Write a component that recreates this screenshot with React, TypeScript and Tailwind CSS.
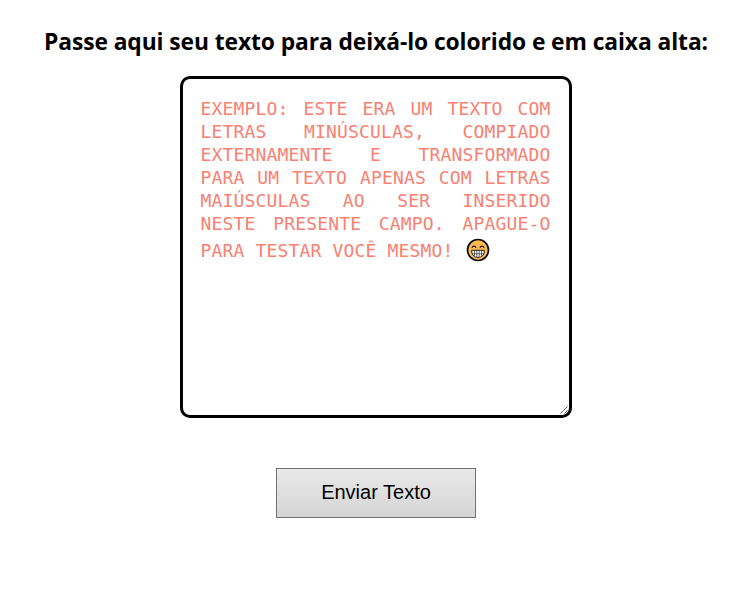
const lines = [
  'Exemplo: este era um texto com',
  'letras minúsculas, compiado',
  'externamente e transformado',
  'para um texto apenas com letras',
  'maiúsculas ao ser inserido',
  'neste presente campo. Apague-o',
];

function GrinningFace() {
  return (
    <svg className="-mt-[2px] ml-[13px] size-6 shrink-0" viewBox="0 0 24 24" fill="none">
      <circle cx="12" cy="12" r="10.5" fill="#ffb94f" stroke="#0b0b12" strokeWidth="1.7" />
      <path d="M5.8 9.6Q8 6.6 10.2 9.6M13.8 9.6Q16 6.6 18.2 9.6" stroke="#0b0b12" strokeWidth="1.1" />
      <path d="M5.6 12.3H18.4C18.4 17.2 15.8 19.4 12 19.4S5.6 17.2 5.6 12.3Z" fill="#fff" stroke="#0b0b12" strokeWidth=".9" />
      <path d="M6 15.8H18M8.5 12.5V18.2M10.8 12.5V19.2M13.2 12.5V19.2M15.5 12.5V18.2" stroke="#0b0b12" strokeWidth=".6" />
    </svg>
  );
}

export default function App() {
  return (
    <main className="flex h-[594px] w-[746px] flex-col items-center overflow-hidden bg-white pl-[6px] text-black">
      <h1 className="mt-[26px] flex h-8 items-center whitespace-nowrap font-['Open_Sans','Noto_Sans',sans-serif] text-[22.8px] font-bold leading-8 tracking-[-0.08px]">
        Passe aqui seu texto para deixá-lo colorido e em caixa alta:
      </h1>
      <div className="relative mt-[18px] h-[342px] w-[392px] shrink-0 rounded-[10px] border-[3px] border-black bg-white pl-[17.5px] pt-[18px] font-['DejaVu_Sans_Mono',monospace] text-[18px] uppercase leading-[23px] tracking-[0.16px] text-[#fa8072]">
        {lines.map((line) => (
          <p key={line} className="h-[23px] w-[350px] whitespace-normal [text-align-last:justify]">
            {line}
          </p>
        ))}
        <p className="flex h-[31px] items-center whitespace-nowrap">
          <span>para testar você mesmo!</span>
          <GrinningFace />
        </p>
        <svg className="absolute bottom-0 right-0 size-[10px]" viewBox="0 0 10 10" fill="none" stroke="#555">
          <path d="M1.5 8.5L8.5 1.5M5.5 8.5L8.5 5.5" strokeWidth=".9" />
        </svg>
      </div>
      <button className="mt-[50px] h-[50px] w-[200px] shrink-0 border border-[#707070] bg-linear-to-b from-[#e9e9e9] to-[#d5d5d5] pb-[3px] font-['Liberation_Sans',Arial,sans-serif] text-[20px] leading-6">
        Enviar Texto
      </button>
    </main>
  );
}
